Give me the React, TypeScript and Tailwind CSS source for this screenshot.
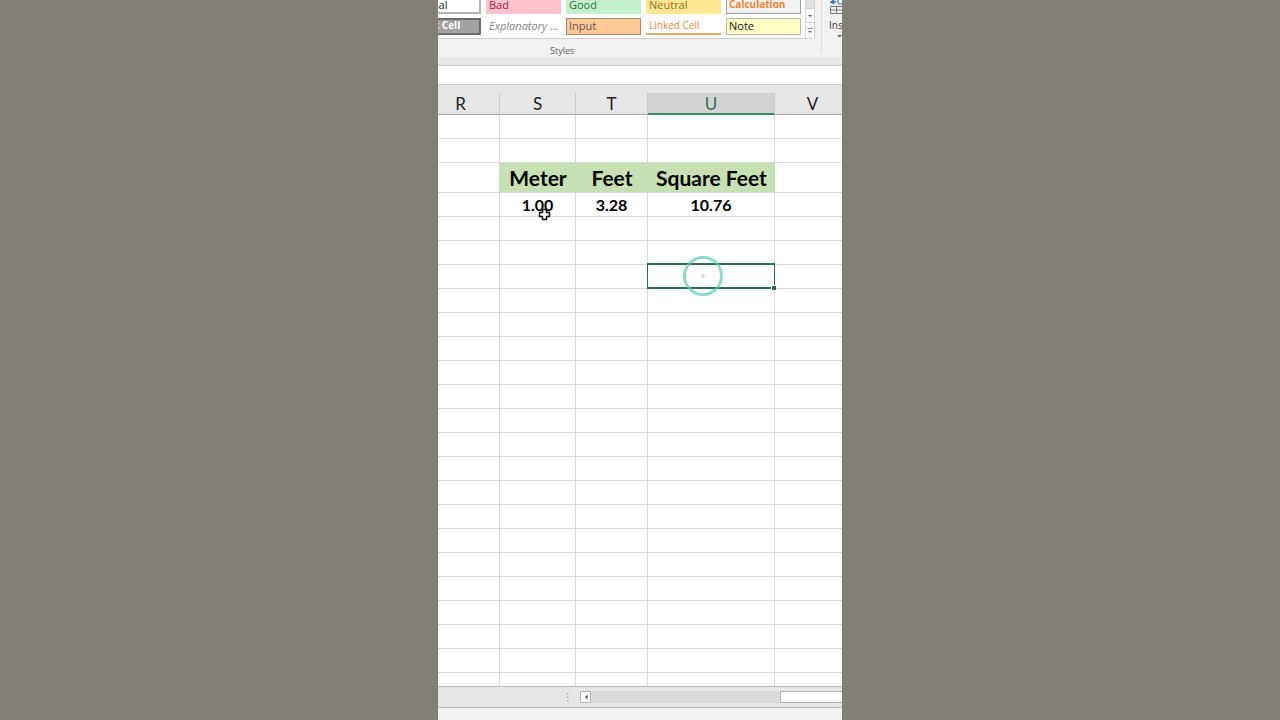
import React from "react";

type Style = { name: string; look: string };

const styles: Style[] = [
  { name: "Normal", look: "bg-white text-[11px] text-[#222] inset-ring-2 inset-ring-[#b4b4b4]" },
  { name: "Bad", look: "bg-[#ffc3cd] text-[11px] text-[#a02040]" },
  { name: "Good", look: "bg-[#c3efcb] text-[11px] text-[#2a7a35]" },
  { name: "Neutral", look: "bg-[#ffe792] text-[11px] text-[#98701c]" },
  { name: "Calculation", look: "bg-[#f2f2f2] text-[10px] text-[#e8862e] font-bold inset-ring inset-ring-[#9a9aa0]" },
  { name: "Check Cell", look: "bg-[#a2a2a2] text-[10px] text-white font-bold inset-ring-2 inset-ring-[#6c6c6c]" },
  { name: "Explanatory ...", look: "bg-white text-[11px] text-[#848484] italic" },
  { name: "Input", look: "bg-[#ffca94] text-[11px] text-[#6b5060] inset-ring inset-ring-[#a68c78]" },
  { name: "Linked Cell", look: "bg-white text-[10px] text-[#e08a38] shadow-[inset_0_-2px_0_#eaa870]" },
  { name: "Note", look: "bg-[#ffffc6] text-[11px] text-[#111] inset-ring inset-ring-[#b8b8a4]" },
];

const columns = ["R", "S", "T", "U", "V"];
const emptyRows = Array.from({ length: 16 }, (_, i) => i);

function Ribbon() {
  return (
    <header className="flex h-[57px] overflow-hidden bg-[#f1f1f1] font-['Open_Sans','Noto_Sans',sans-serif]">
      <section aria-label="Styles" className="flex flex-1 flex-col">
        <div className="mr-[6px] flex h-[39px] shrink-0 border-b border-[#cfcfcf]">
          <div className="-mt-[3px] -ml-8 grid auto-rows-[17px] grid-cols-[repeat(5,75px)] gap-x-[5px] gap-y-1 bg-white pr-1">
            {styles.map((s) => (
              <button key={s.name} type="button" className={`px-[3px] pb-[2px] text-left leading-[15px] whitespace-nowrap ${s.look}`}>
                {s.name}
              </button>
            ))}
          </div>
          <div className="flex flex-1 flex-col border-x border-[#d4d4d4] bg-white">
            <button type="button" aria-label="Scroll up" className="h-[9px] border-b border-[#cccccc] bg-[#e2e2e2]" />
            <button type="button" aria-label="Scroll down" className="flex h-[14px] items-center justify-center border-b border-[#cccccc]">
              <svg width="4" height="2" viewBox="0 0 4 2"><path d="M0 0h4L2 2z" fill="#555" /></svg>
            </button>
            <button type="button" aria-label="More styles" className="flex flex-1 items-center justify-center">
              <svg width="6" height="6" viewBox="0 0 6 6"><path d="M.5 .5h5" stroke="#888" /><path d="M1 3h4L3 5z" fill="#666" /></svg>
            </button>
          </div>
        </div>
        <p className="pt-[6px] pl-[112px] text-[9px] leading-3 text-[#606060]">Styles</p>
      </section>
      <button type="button" className="mb-1 flex w-[21px] flex-col items-start overflow-hidden border-l border-[#dadada] pl-[7px] text-left">
        <svg width="24" height="16" viewBox="0 0 24 16" className="shrink-0" fill="none">
          <path d="M5 0 2 2l3 2M2 2h5" stroke="#3279b5" strokeWidth="1.5" />
          <path d="M9 0v4h9" stroke="#3279b5" />
          <path d="M1.500 6.500h18v7h-18zM1.500 10h18M7.500 6.500v7M13.500 6.500v7" stroke="#777" />
        </svg>
        <span className="text-[10px] leading-[18px] text-[#444]">Insert</span>
        <svg width="20" height="4" viewBox="0 0 20 4"><path d="M8 1h5l-2.500 2.500z" fill="#666" /></svg>
      </button>
    </header>
  );
}

const cell = "border-r border-b border-[#d9d9d9] p-0";
const lastCell = "border-b border-[#d9d9d9] p-0";
const headCell = "border-r border-b border-r-[#cacaca] border-b-[#a8a8a8] p-0 pt-px font-normal";
const greenCell = "border-b border-[#d9d9d9] bg-[#c6e0b4] p-0 text-center whitespace-nowrap";

function Row() {
  return (
    <tr className="h-6">
      {columns.map((c) => (
        <td key={c} className={c === "V" ? lastCell : cell} />
      ))}
    </tr>
  );
}

function Sheet() {
  return (
    <table className="w-full table-fixed border-separate border-spacing-0 bg-white font-[Lato,sans-serif] text-black">
      <colgroup>
        <col className="w-[62px]" />
        <col className="w-[76px]" />
        <col className="w-[72px]" />
        <col className="w-[127px]" />
        <col />
      </colgroup>
      <thead>
        <tr className="h-[22px] bg-[#e6e6e6] text-[17px] leading-5 text-[#222]">
          <th scope="col" className={`${headCell} pr-4`}>R</th>
          <th scope="col" className={headCell}>S</th>
          <th scope="col" className={headCell}>T</th>
          <th scope="col" className="border-r border-b border-r-[#cacaca] border-b-[#3c8a60] bg-[#d2d2d2] p-0 pt-px font-normal text-[#356b50] shadow-[inset_0_-1px_0_#3c8a60]">U</th>
          <th scope="col" className="border-b border-b-[#a8a8a8] p-0 pt-px pl-2 font-normal">V</th>
        </tr>
      </thead>
      <tbody>
        <Row />
        <Row />
        <tr className="h-[30px] text-[21px] leading-6 font-bold">
          <td className="border-r border-b border-r-[#c6e0b4] border-b-[#d9d9d9] p-0" />
          <td className={greenCell}>Meter</td>
          <td className={greenCell}>Feet</td>
          <td className={greenCell}>Square Feet</td>
          <td className={lastCell} />
        </tr>
        <tr className="h-6 text-center text-[16px] leading-5 font-bold">
          <td className={cell} />
          <td className={`${cell} relative`}>
            1.00
            <svg className="absolute top-[15px] left-[38px]" width="13" height="14" viewBox="0 0 13 14" aria-hidden="true">
              <path d="M4.500 1.500h4v3h3v4h-3v3h-4v-3h-3v-4h3z" fill="#fff" stroke="#111" strokeWidth="1.500" />
            </svg>
          </td>
          <td className={cell}>3.28</td>
          <td className={cell}>10.76</td>
          <td className={lastCell} />
        </tr>
        <Row />
        <Row />
        <tr className="h-6">
          <td className={cell} />
          <td className={cell} />
          <td className={cell} />
          <td className={`${cell} relative`}>
            <div className="absolute -top-[2px] -right-px -bottom-px -left-px border-x border-y-2 border-[#2c6b4c]" />
            <div className="absolute -right-[2px] -bottom-[2px] size-[5px] border-t border-l border-white bg-[#2c6b4c]" />
            <svg className="absolute -top-[9px] left-[35px]" width="40" height="40" viewBox="0 0 40 40" aria-hidden="true">
              <circle cx="20" cy="20" r="18.500" fill="none" stroke="#5cc9b4" strokeOpacity=".7" strokeWidth="3" />
              <circle cx="20" cy="20" r="2" fill="#ddd" />
            </svg>
          </td>
          <td className={lastCell} />
        </tr>
        {emptyRows.map((i) => (
          <Row key={i} />
        ))}
        <tr className="h-[13px]">
          {columns.map((c) => (
            <td key={c} className={c === "V" ? "p-0" : "border-r border-[#d9d9d9] p-0"} />
          ))}
        </tr>
      </tbody>
    </table>
  );
}

function ScrollBar() {
  return (
    <div className="flex h-[22px] items-center border-y border-[#b8b8b8] bg-[#e6e6e6] pl-[128px]">
      <svg width="4" height="10" viewBox="0 0 4 10" className="mr-[10px]" aria-hidden="true">
        <path d="M1 1h1.500v1.500H1zM1 4.500h1.500V6H1zM1 8h1.500v1.500H1z" fill="#aaa" />
      </svg>
      <button type="button" aria-label="Scroll left" className="flex h-3 w-[11px] items-center justify-center border border-[#b4b4b4] bg-white">
        <svg width="4" height="6" viewBox="0 0 4 6"><path d="M3.500 .5v5L1 3z" fill="#555" /></svg>
      </button>
      <div className="flex h-3 flex-1 justify-end bg-[#dadada]">
        <div className="w-[62px] border border-r-0 border-[#b4b4b4] bg-white" />
      </div>
    </div>
  );
}

export default function App() {
  return (
    <div className="flex min-h-screen justify-center bg-[#837e76]">
      <main className="flex w-full max-w-[404px] flex-col overflow-hidden bg-[#f1f1f1]">
        <Ribbon />
        <div className="h-[9px] border-b border-[#cccccc] bg-[#e6e6e6]" />
        <input aria-label="Formula bar" className="block h-[18px] w-full bg-white px-1 text-xs outline-none" />
        <div className="h-[9px] border-t border-[#cccccc] bg-[#e6e6e6]" />
        <Sheet />
        <ScrollBar />
      </main>
    </div>
  );
}
